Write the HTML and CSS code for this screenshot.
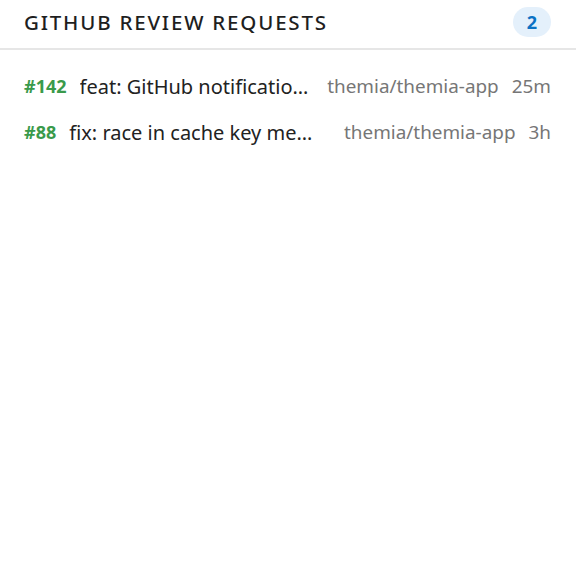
FILE: index.html
```html
<!DOCTYPE html>
<html>
<head>
<meta charset="utf-8">
<link rel="stylesheet" href="styles.css">
</head>
<body>
<div class="panel">
  <div class="header">
    <div class="title">GITHUB REVIEW REQUESTS</div>
    <div class="badge">2</div>
  </div>
  <div class="list">
    <div class="row">
      <span class="num">#142</span>
      <span class="name">feat: GitHub notifications panel for review requests</span>
      <span class="repo">themia/themia-app</span>
      <span class="time">25m</span>
    </div>
    <div class="row">
      <span class="num">#88</span>
      <span class="name">fix: race in cache key memoization</span>
      <span class="repo">themia/themia-app</span>
      <span class="time">3h</span>
    </div>
  </div>
</div>
</body>
</html>
```
FILE: styles.css
```css
html, body {
  margin: 0;
  padding: 0;
  background: #ffffff;
}
body {
  font-family: "Noto Sans", "Open Sans", sans-serif;
  color: #222222;
}
.panel {
  width: 576px;
}
.header {
  height: 50px;
  box-sizing: border-box;
  padding: 0 25px 4px 24px;
  display: flex;
  align-items: center;
  justify-content: space-between;
  border-bottom: 2px solid #e6e6e6;
}
.title {
  font-size: 20.5px;
  font-weight: 500;
  letter-spacing: 1.8px;
  color: #1f1f1f;
}
.badge {
  min-width: 38px;
  height: 30px;
  border-radius: 15px;
  background: #e4f0fb;
  color: #0b72c4;
  font-weight: 700;
  font-size: 18px;
  display: flex;
  align-items: center;
  justify-content: center;
}
.list {
  padding: 13px 25px 0 24px;
}
.row {
  height: 46px;
  display: flex;
  align-items: center;
  gap: 13px;
  font-size: 19px;
  white-space: nowrap;
}
.num {
  color: #3a9a4b;
  font-weight: 700;
  font-size: 18px;
}
.name {
  flex: 1;
  min-width: 0;
  overflow: hidden;
  text-overflow: ellipsis;
  color: #222222;
  font-size: 20px;
}
.repo, .time {
  color: #767676;
  font-size: 18.9px;
}
```
